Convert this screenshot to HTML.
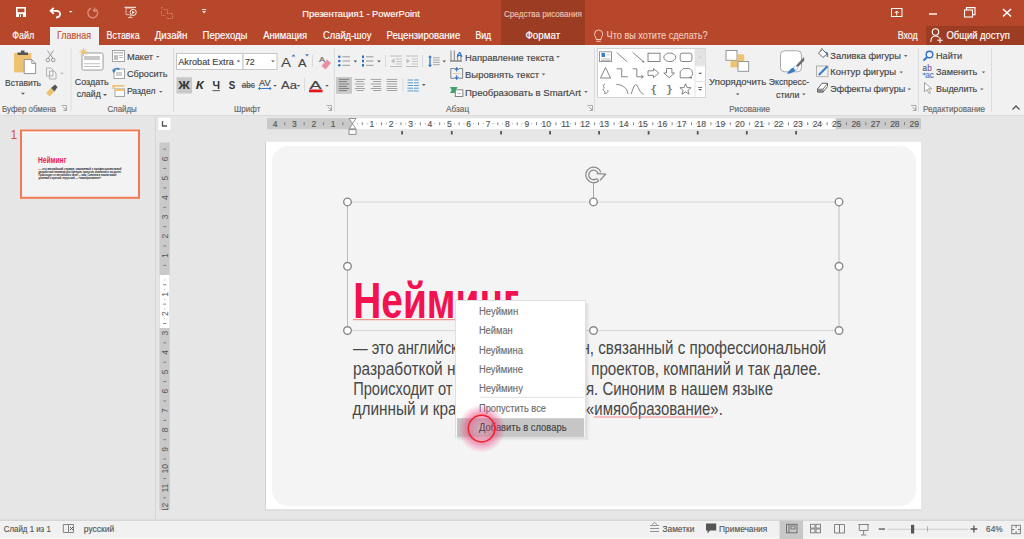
<!DOCTYPE html>
<html><head><meta charset="utf-8">
<style>
*{margin:0;padding:0}
html,body{width:1024px;height:539px;overflow:hidden;background:#E6E6E6}
svg{position:absolute;left:0;top:0;font-family:"Liberation Sans",sans-serif}
</style></head><body>
<svg width="1024" height="539" viewBox="0 0 1024 539">
<rect x="0" y="0" width="1024" height="45" fill="#B7472A" />
<rect x="501" y="0" width="84" height="45" fill="#9C3C23" />
<rect x="926" y="26" width="98" height="19" fill="#9C3C23" />
<rect x="50" y="27" width="49" height="18" fill="#F1F1F1" />
<rect x="0" y="45" width="1024" height="70" fill="#F1F1F1" />
<rect x="0" y="115" width="1024" height="1" fill="#DADADA" />
<rect x="0" y="116" width="1024" height="404" fill="#E6E6E6" />
<rect x="155" y="116" width="1" height="404" fill="#D6D6D6" />
<rect x="0" y="519.5" width="1024" height="1.5" fill="#D6D6D6" />
<rect x="0" y="521" width="1024" height="18" fill="#F1F1F1" />
<rect x="0" y="537" width="1024" height="2" fill="#F6F6F6" />
<rect x="16" y="7" width="10" height="10" fill="#FFFFFF" />
<rect x="17.6" y="8.6" width="6.8" height="3.6" fill="#B7472A" />
<rect x="19" y="14.2" width="4" height="2.8" fill="#B7472A" />
<rect x="20" y="15" width="1" height="2" fill="#FFFFFF" />
<path d="M51 10.8 H56.8 A3.3 3.3 0 0 1 56.8 17.4 H56" fill="none" stroke="#fff" stroke-width="1.8"/>
<path d="M53.8 7.8 L50.6 10.8 L53.8 13.8" fill="none" stroke="#fff" stroke-width="1.8"/>
<path d="M68.9 10.9h3.6l-1.8 1.8z" fill="#FFFFFF"/>
<path d="M96 9.2 A4.9 4.9 0 1 1 91 8.3" fill="none" stroke="#D98C74" stroke-width="1.5"/>
<path d="M94.6 7.5 V11.5 M92.8 9.8 L94.6 11.6 L96.4 9.8" fill="none" stroke="#D98C74" stroke-width="1.3"/>
<path d="M124.5 7.3 H136" stroke="#fff" stroke-width="1"/>
<path d="M133 8 H126 V14.6 H129.5" fill="none" stroke="#F3D0C4" stroke-width="0.8"/>
<circle cx="133.2" cy="12.4" r="3.1" fill="none" stroke="#fff" stroke-width="0.9"/>
<path d="M132.2 10.8 L134.8 12.4 L132.2 14z" fill="#fff"/>
<path d="M130.3 15 V17.3 M128 17.6 H132.5" stroke="#F3D0C4" stroke-width="0.9"/>
<path d="M162 7 v2 M161 8 h2 M163.5 9.5 h4 v4 M161.5 11 v4.5 h4 M167 13.5 h5.5 v5 h-5.5 v-2" fill="none" stroke="#D98C74" stroke-width="0.9" stroke-dasharray="1.2 0.8"/>
<path d="M202 9.6 H206.2" stroke="#fff" stroke-width="0.9"/>
<path d="M202.1 11.3h4l-2 2z" fill="#FFFFFF"/>
<rect x="891.5" y="8.5" width="10.5" height="8" fill="none" stroke="#fff" stroke-width="1"/>
<path d="M896.7 15.5 V11 M894.7 13 L896.7 11 L898.7 13" fill="none" stroke="#fff" stroke-width="1"/>
<rect x="929" y="13.3" width="8" height="1.4" fill="#FFFFFF" />
<rect x="964.5" y="10" width="8" height="7" fill="none" stroke="#fff" stroke-width="1.1"/>
<path d="M966.5 10 V7.6 H975 V14.6 H972.5" fill="none" stroke="#fff" stroke-width="1.1"/>
<path d="M1003 9 L1011 16.5 M1011 9 L1003 16.5" stroke="#fff" stroke-width="1.6"/>
<text x="302.3" y="16.6" font-size="9.3" fill="#FFFFFF" stroke="#FFFFFF" stroke-width="0.15" textLength="117.5" lengthAdjust="spacingAndGlyphs" >Презентация1 - PowerPoint</text>
<text x="504" y="16.6" font-size="9" fill="#EBC2B4" stroke="#EBC2B4" stroke-width="0.15" textLength="78" lengthAdjust="spacingAndGlyphs" >Средства рисования</text>
<text x="12.2" y="39.1" font-size="10" fill="#FFFFFF" stroke="#FFFFFF" stroke-width="0.15" textLength="22.1" lengthAdjust="spacingAndGlyphs" >Файл</text>
<text x="57" y="39.1" font-size="10" fill="#C5502E" stroke="#C5502E" stroke-width="0.15" textLength="34" lengthAdjust="spacingAndGlyphs" >Главная</text>
<text x="106.6" y="39.1" font-size="10" fill="#FFFFFF" stroke="#FFFFFF" stroke-width="0.15" textLength="33" lengthAdjust="spacingAndGlyphs" >Вставка</text>
<text x="154.8" y="39.1" font-size="10" fill="#FFFFFF" stroke="#FFFFFF" stroke-width="0.15" textLength="32.5" lengthAdjust="spacingAndGlyphs" >Дизайн</text>
<text x="202.5" y="39.1" font-size="10" fill="#FFFFFF" stroke="#FFFFFF" stroke-width="0.15" textLength="45" lengthAdjust="spacingAndGlyphs" >Переходы</text>
<text x="263.2" y="39.1" font-size="10" fill="#FFFFFF" stroke="#FFFFFF" stroke-width="0.15" textLength="44" lengthAdjust="spacingAndGlyphs" >Анимация</text>
<text x="323.1" y="39.1" font-size="10" fill="#FFFFFF" stroke="#FFFFFF" stroke-width="0.15" textLength="48.2" lengthAdjust="spacingAndGlyphs" >Слайд-шоу</text>
<text x="386.5" y="39.1" font-size="10" fill="#FFFFFF" stroke="#FFFFFF" stroke-width="0.15" textLength="73.7" lengthAdjust="spacingAndGlyphs" >Рецензирование</text>
<text x="475.4" y="39.1" font-size="10" fill="#FFFFFF" stroke="#FFFFFF" stroke-width="0.15" textLength="15.7" lengthAdjust="spacingAndGlyphs" >Вид</text>
<text x="525.4" y="39.1" font-size="10" fill="#FFFFFF" stroke="#FFFFFF" stroke-width="0.15" textLength="34.8" lengthAdjust="spacingAndGlyphs" >Формат</text>
<path d="M596.2 39.5 C596.2 37 594.6 36.6 594.6 34 A4 4 0 0 1 602.6 34 C602.6 36.6 601 37 601 39.5 Z M596.4 41.3 H600.8" fill="none" stroke="#F2C9BB" stroke-width="1"/>
<text x="606.6" y="39.1" font-size="10" fill="#F2C9BB" stroke="#F2C9BB" stroke-width="0.15" textLength="101" lengthAdjust="spacingAndGlyphs" >Что вы хотите сделать?</text>
<text x="897.7" y="39.1" font-size="10" fill="#FFFFFF" stroke="#FFFFFF" stroke-width="0.15" textLength="20" lengthAdjust="spacingAndGlyphs" >Вход</text>
<circle cx="935.5" cy="32" r="3.2" fill="none" stroke="#fff" stroke-width="1.1"/>
<path d="M930.8 42 C930.8 37.8 933 36 935.5 36 C937 36 938 36.5 938.8 37.3" fill="none" stroke="#fff" stroke-width="1.1"/>
<path d="M940 37.5 V43 M937.3 40.3 H942.7" stroke="#fff" stroke-width="1.1"/>
<text x="946.5" y="39.1" font-size="10" fill="#FFFFFF" stroke="#FFFFFF" stroke-width="0.15" textLength="63.3" lengthAdjust="spacingAndGlyphs" >Общий доступ</text>
<text x="2" y="111.7" font-size="8.3" fill="#666666" stroke="#666666" stroke-width="0.15" textLength="54" lengthAdjust="spacingAndGlyphs" >Буфер обмена</text>
<text x="107.4" y="111.7" font-size="8.3" fill="#666666" stroke="#666666" stroke-width="0.15" textLength="29.4" lengthAdjust="spacingAndGlyphs" >Слайды</text>
<text x="234" y="111.7" font-size="8.3" fill="#666666" stroke="#666666" stroke-width="0.15" textLength="26.3" lengthAdjust="spacingAndGlyphs" >Шрифт</text>
<text x="446.1" y="111.7" font-size="8.3" fill="#666666" stroke="#666666" stroke-width="0.15" textLength="23" lengthAdjust="spacingAndGlyphs" >Абзац</text>
<text x="729.2" y="111.7" font-size="8.3" fill="#666666" stroke="#666666" stroke-width="0.15" textLength="40.9" lengthAdjust="spacingAndGlyphs" >Рисование</text>
<text x="922.9" y="111.7" font-size="8.3" fill="#666666" stroke="#666666" stroke-width="0.15" textLength="62.2" lengthAdjust="spacingAndGlyphs" >Редактирование</text>
<path d="M61.5 105.5 h5 v5 M63.0 107 l3.5 3.5 M63.5 110.5 h2.5 v-2.5" fill="none" stroke="#9A9A9A" stroke-width="0.8"/>
<path d="M326.5 105.5 h5 v5 M328.0 107 l3.5 3.5 M328.5 110.5 h2.5 v-2.5" fill="none" stroke="#9A9A9A" stroke-width="0.8"/>
<path d="M587.5 105.5 h5 v5 M589.0 107 l3.5 3.5 M589.5 110.5 h2.5 v-2.5" fill="none" stroke="#9A9A9A" stroke-width="0.8"/>
<path d="M911 105.5 h5 v5 M912.5 107 l3.5 3.5 M913 110.5 h2.5 v-2.5" fill="none" stroke="#9A9A9A" stroke-width="0.8"/>
<path d="M1012.5 109.5 L1016 106 L1019.5 109.5" fill="none" stroke="#555" stroke-width="1.3"/>
<rect x="70.5" y="48" width="1" height="64" fill="#DDDDDD" />
<rect x="173" y="48" width="1" height="64" fill="#DDDDDD" />
<rect x="334" y="48" width="1" height="64" fill="#DDDDDD" />
<rect x="594" y="48" width="1" height="64" fill="#DDDDDD" />
<rect x="918" y="48" width="1" height="64" fill="#DDDDDD" />
<rect x="991" y="48" width="1" height="64" fill="#DDDDDD" />
<rect x="14" y="53" width="17.4" height="19.4" fill="#EFC271" />
<path d="M17.5 55 V52.5 H21 V50.5 H24.5 V52.5 H28 V55z" fill="#555"/>
<path d="M24.2 59.6 H31.8 L35.6 63.4 V73.6 H24.2Z" fill="#fff" stroke="#888" stroke-width="0.9"/>
<path d="M31.8 59.6 V63.4 H35.6" fill="none" stroke="#888" stroke-width="0.9"/>
<text x="5" y="85.8" font-size="9.4" fill="#444444" stroke="#444444" stroke-width="0.15" textLength="36" lengthAdjust="spacingAndGlyphs" >Вставить</text>
<path d="M21 92.8h4l-2 2z" fill="#555"/>
<path d="M47.5 50.5 L53 58.5 M53.5 50.5 L48 58.5" stroke="#9A9A9A" stroke-width="1"/>
<circle cx="47.8" cy="60" r="1.8" fill="none" stroke="#9A9A9A" stroke-width="1"/><circle cx="53.2" cy="60" r="1.8" fill="none" stroke="#9A9A9A" stroke-width="1"/>
<path d="M46.5 68 h4.5 l2 2 v6 h-6.5z M49.5 71 h4.5 l2 2 v6 h-6.5z" fill="#F4F4F4" stroke="#A8A8A8" stroke-width="0.9"/>
<path d="M60.4 72.7h3.2l-1.6 1.6z" fill="#A0A0A0"/>
<path d="M46 93 L51 88 L54.5 91.5 L49.5 96.5z" fill="#EFC271"/>
<path d="M51 88 L55 84.5 L57.5 87 L54.5 91.5z" fill="#555"/>
<rect x="82" y="53" width="21" height="17" rx="1.5" fill="#fff" stroke="#9A9A9A" stroke-width="1"/>
<rect x="84" y="56" width="16" height="4" fill="#C8C8C8" />
<rect x="84" y="63.3" width="16" height="0.9" fill="#B8B8B8" />
<rect x="84" y="66" width="16" height="0.9" fill="#B8B8B8" />
<g stroke="#EFC271" stroke-width="1"><path d="M83.5 48 v8 M79.5 52 h8 M80.7 49.2 l5.6 5.6 M86.3 49.2 l-5.6 5.6"/></g><circle cx="83.5" cy="52" r="2" fill="#EFC271"/>
<text x="74.7" y="85.4" font-size="9.4" fill="#444444" stroke="#444444" stroke-width="0.15" textLength="34" lengthAdjust="spacingAndGlyphs" >Создать</text>
<text x="76.7" y="97.2" font-size="9.4" fill="#444444" stroke="#444444" stroke-width="0.15" textLength="24" lengthAdjust="spacingAndGlyphs" >слайд</text>
<path d="M103 94.0h4l-2 2z" fill="#555"/>
<rect x="112.5" y="50.5" width="12" height="11" fill="#fff" stroke="#9A9A9A" stroke-width="0.9"/>
<rect x="114" y="52" width="9" height="1.5" fill="#BFBFBF" />
<rect x="114" y="55" width="4" height="5" fill="#BFBFBF" />
<rect x="119" y="55" width="4" height="1" fill="#BFBFBF" />
<rect x="119" y="57" width="4" height="1" fill="#BFBFBF" />
<text x="126.9" y="59.9" font-size="9.4" fill="#444444" stroke="#444444" stroke-width="0.15" textLength="26.2" lengthAdjust="spacingAndGlyphs" >Макет</text>
<path d="M156.0 55.9h3.6l-1.8 1.8z" fill="#666"/>
<rect x="114" y="69" width="10.5" height="9.5" fill="#fff" stroke="#9A9A9A" stroke-width="0.9"/>
<rect x="116" y="72" width="6" height="4" fill="#CFCFCF" />
<path d="M113.5 71.5 A3.5 3.5 0 0 1 119.5 69.5" fill="none" stroke="#3C7CC4" stroke-width="1.5"/><path d="M112 69.5 L113.5 73 L116 70.5z" fill="#3C7CC4"/>
<text x="126.9" y="76.8" font-size="9.4" fill="#444444" stroke="#444444" stroke-width="0.15" textLength="40.6" lengthAdjust="spacingAndGlyphs" >Сбросить</text>
<rect x="112.5" y="85" width="12" height="1.6" fill="#EFC271" />
<rect x="112.5" y="85" width="2" height="4" fill="#EFC271" />
<rect x="115" y="89" width="9.5" height="7.5" fill="#fff" stroke="#9A9A9A" stroke-width="0.9"/>
<rect x="115" y="89" width="9.5" height="2" fill="#EFC271" />
<text x="126.9" y="94.4" font-size="9.4" fill="#444444" stroke="#444444" stroke-width="0.15" textLength="28.6" lengthAdjust="spacingAndGlyphs" >Раздел</text>
<path d="M159.0 90.89999999999999h3.6l-1.8 1.8z" fill="#666"/>
<rect x="176.5" y="53.5" width="66.5" height="16" fill="#fff" stroke="#C6C6C6" stroke-width="1"/>
<rect x="243" y="53.5" width="34" height="16" fill="#fff" stroke="#C6C6C6" stroke-width="1"/>
<text x="178.2" y="65.4" font-size="9.4" fill="#444444" stroke="#444444" stroke-width="0.15" textLength="55.6" lengthAdjust="spacingAndGlyphs" >Akrobat Extra</text>
<path d="M236.7 60.4h3.6l-1.8 1.8z" fill="#555"/>
<text x="245" y="65.4" font-size="9.4" fill="#444444" stroke="#444444" stroke-width="0.15" textLength="9.7" lengthAdjust="spacingAndGlyphs" >72</text>
<path d="M271.2 60.4h3.6l-1.8 1.8z" fill="#555"/>
<text x="281" y="67" font-size="13" fill="#444444" textLength="10" lengthAdjust="spacingAndGlyphs" >A</text>
<path d="M291.5 56.5 L293.5 54.2 L295.5 56.5z" fill="#3C7CC4"/>
<text x="298" y="67" font-size="10.5" fill="#444444" stroke="#444444" stroke-width="0.15" textLength="8.5" lengthAdjust="spacingAndGlyphs" >A</text>
<path d="M305 54.3 L307 56.6 L309 54.3z" fill="#3C7CC4"/>
<rect x="312" y="55" width="1" height="12" fill="#DADADA" />
<text x="319" y="62" font-size="8" fill="#666" stroke="#666" stroke-width="0.15" textLength="6" lengthAdjust="spacingAndGlyphs" >A</text>
<path d="M321.5 66 L327 59.5 L331 63 L325.5 69.5z" fill="#E88FA0"/>
<rect x="176.5" y="77.2" width="15.6" height="16.3" fill="#C8C8C8" />
<text x="178.2" y="89.3" font-size="11" fill="#333" font-weight="bold" textLength="11.6" lengthAdjust="spacingAndGlyphs" >Ж</text>
<text x="195.8" y="89.3" font-size="11" fill="#333" font-weight="bold" textLength="8" lengthAdjust="spacingAndGlyphs" font-style="italic">К</text>
<text x="212.5" y="89.3" font-size="11" fill="#333" font-weight="bold" textLength="7.5" lengthAdjust="spacingAndGlyphs" >Ч</text>
<rect x="212.5" y="90.3" width="7.5" height="0.8" fill="#333" />
<text x="228.7" y="89.3" font-size="11.5" fill="#333" font-weight="bold" textLength="6.5" lengthAdjust="spacingAndGlyphs" >S</text>
<text x="241.7" y="88.3" font-size="9" fill="#555" stroke="#555" stroke-width="0.15" textLength="13" lengthAdjust="spacingAndGlyphs" >abc</text>
<rect x="241.5" y="85.3" width="13.5" height="0.9" fill="#555" />
<text x="259" y="85.5" font-size="9" fill="#444444" stroke="#444444" stroke-width="0.15" textLength="11.5" lengthAdjust="spacingAndGlyphs" >AV</text>
<path d="M258.5 88.5 H271 M260 87 L258.5 88.5 L260 90 M269.5 87 L271 88.5 L269.5 90" fill="none" stroke="#3C7CC4" stroke-width="1"/>
<path d="M273.2 84.89999999999999h3.6l-1.8 1.8z" fill="#555"/>
<text x="281" y="89.3" font-size="11" fill="#444444" stroke="#444444" stroke-width="0.15" textLength="16" lengthAdjust="spacingAndGlyphs" >Aa</text>
<path d="M296.7 84.89999999999999h3.6l-1.8 1.8z" fill="#555"/>
<rect x="304" y="78" width="1" height="13" fill="#DADADA" />
<text x="309.5" y="88.5" font-size="11.5" fill="#444444" stroke="#444444" stroke-width="0.15" textLength="12" lengthAdjust="spacingAndGlyphs" >A</text>
<rect x="309" y="89.5" width="13.5" height="2.8" fill="#E5141B" />
<path d="M325.2 84.89999999999999h3.6l-1.8 1.8z" fill="#555"/>
<circle cx="339.3" cy="56.8" r="1.3" fill="#2E72C6"/>
<circle cx="339.3" cy="61" r="1.3" fill="#2E72C6"/>
<circle cx="339.3" cy="65.3" r="1.3" fill="#2E72C6"/>
<rect x="342.5" y="56.3" width="7.5" height="1" fill="#9A9A9A" />
<rect x="342.5" y="60.5" width="7.5" height="1" fill="#9A9A9A" />
<rect x="342.5" y="64.8" width="7.5" height="1" fill="#9A9A9A" />
<path d="M353.59999999999997 60.6h3.6l-1.8 1.8z" fill="#555"/>
<rect x="362" y="55.5" width="2" height="2.6" fill="#2E72C6" />
<rect x="362" y="59.7" width="2" height="2.6" fill="#2E72C6" />
<rect x="362" y="64.0" width="2" height="2.6" fill="#2E72C6" />
<rect x="366" y="56.3" width="7.5" height="1" fill="#9A9A9A" />
<rect x="366" y="60.5" width="7.5" height="1" fill="#9A9A9A" />
<rect x="366" y="64.8" width="7.5" height="1" fill="#9A9A9A" />
<path d="M377.2 60.6h3.6l-1.8 1.8z" fill="#555"/>
<rect x="385" y="55" width="1" height="12" fill="#DADADA" />
<rect x="390" y="55.5" width="12" height="1" fill="#BDBDBD" />
<rect x="390" y="66" width="12" height="1" fill="#BDBDBD" />
<rect x="396" y="58.5" width="6" height="1" fill="#C4C4C4" />
<rect x="396" y="61" width="6" height="1" fill="#C4C4C4" />
<rect x="396" y="63.5" width="6" height="1" fill="#C4C4C4" />
<path d="M394.5 58.5 L391 61 L394.5 63.5z" fill="#BDBDBD"/>
<rect x="406" y="55.5" width="12" height="1" fill="#BDBDBD" />
<rect x="406" y="66" width="12" height="1" fill="#BDBDBD" />
<rect x="412" y="58.5" width="6" height="1" fill="#C4C4C4" />
<rect x="412" y="61" width="6" height="1" fill="#C4C4C4" />
<rect x="412" y="63.5" width="6" height="1" fill="#C4C4C4" />
<path d="M406.5 58.5 L410 61 L406.5 63.5z" fill="#BDBDBD"/>
<rect x="422" y="55" width="1" height="12" fill="#DADADA" />
<path d="M428 57.5 L430 55.2 L432 57.5z M428 64.8 L430 67.2 L432 64.8z" fill="#2E72C6"/><path d="M430 57 V65" stroke="#2E72C6" stroke-width="1.3"/>
<rect x="433" y="57.3" width="6.8" height="1" fill="#A8A8A8" />
<rect x="433" y="59.6" width="6.8" height="1" fill="#A8A8A8" />
<rect x="433" y="61.9" width="6.8" height="1" fill="#A8A8A8" />
<rect x="433" y="64.2" width="6.8" height="1" fill="#A8A8A8" />
<path d="M442.4 60.6h3.6l-1.8 1.8z" fill="#555"/>
<rect x="336" y="77" width="16" height="16.8" fill="#C8C8C8" />
<rect x="338.8" y="78.89999999999999" width="10.4" height="0.9" fill="#7A7A7A" />
<rect x="354.8" y="78.89999999999999" width="10.3" height="0.9" fill="#999999" />
<rect x="370.6" y="78.89999999999999" width="10.6" height="0.9" fill="#999999" />
<rect x="386.6" y="78.89999999999999" width="10.6" height="0.9" fill="#999999" />
<rect x="338.8" y="81.1" width="8.2" height="0.9" fill="#7A7A7A" />
<rect x="356.2" y="81.1" width="7.5" height="0.9" fill="#999999" />
<rect x="373" y="81.1" width="8.2" height="0.9" fill="#999999" />
<rect x="386.6" y="81.1" width="10.6" height="0.9" fill="#999999" />
<rect x="338.8" y="83.5" width="10.4" height="0.9" fill="#7A7A7A" />
<rect x="354.8" y="83.5" width="10.3" height="0.9" fill="#999999" />
<rect x="370.6" y="83.5" width="10.6" height="0.9" fill="#999999" />
<rect x="386.6" y="83.5" width="10.6" height="0.9" fill="#999999" />
<rect x="338.8" y="85.89999999999999" width="8.2" height="0.9" fill="#7A7A7A" />
<rect x="356.2" y="85.89999999999999" width="7.5" height="0.9" fill="#999999" />
<rect x="373" y="85.89999999999999" width="8.2" height="0.9" fill="#999999" />
<rect x="386.6" y="85.89999999999999" width="10.6" height="0.9" fill="#999999" />
<rect x="338.8" y="88.0" width="10.4" height="0.9" fill="#7A7A7A" />
<rect x="354.8" y="88.0" width="10.3" height="0.9" fill="#999999" />
<rect x="370.6" y="88.0" width="10.6" height="0.9" fill="#999999" />
<rect x="386.6" y="88.0" width="10.6" height="0.9" fill="#999999" />
<rect x="338.8" y="90.0" width="8.2" height="0.9" fill="#7A7A7A" />
<rect x="356.2" y="90.0" width="7.5" height="0.9" fill="#999999" />
<rect x="373" y="90.0" width="8.2" height="0.9" fill="#999999" />
<rect x="386.6" y="90.0" width="10.6" height="0.9" fill="#999999" />
<rect x="402.4" y="78" width="1" height="13" fill="#DADADA" />
<rect x="407.5" y="79.5" width="11.3" height="1" fill="#5B9BD5" />
<rect x="407.5" y="82.3" width="11.3" height="1" fill="#5B9BD5" />
<rect x="407.5" y="85" width="11.3" height="1" fill="#5B9BD5" />
<rect x="407.5" y="87.7" width="11.3" height="1" fill="#5B9BD5" />
<rect x="407.5" y="90.4" width="11.3" height="1" fill="#5B9BD5" />
<rect x="413" y="79" width="0.8" height="12" fill="#fff" />
<path d="M422.0 84.1h3.6l-1.8 1.8z" fill="#555"/>
<path d="M451 50.5 V60.5 M454.3 50.5 V60.5 M457.6 54 V60.5 M460.9 54 V60.5" stroke="#777" stroke-width="0.9"/>
<path d="M450 61 H462" stroke="#555" stroke-width="1"/>
<text x="456.6" y="56.6" font-size="8" fill="#2E72C6" font-weight="bold" textLength="6" lengthAdjust="spacingAndGlyphs" >A</text>
<path d="M450.8 68.5 H454.5 M459 68.5 H462.6 V78.3 H459 M454.5 78.3 H450.8 V68.5" fill="none" stroke="#777" stroke-width="0.9"/>
<rect x="453" y="73" width="7.5" height="0.8" fill="#E8C49A" />
<path d="M456.7 68 V71.5 M456.7 75.3 V79 M454.8 69.8 L456.7 67.8 L458.6 69.8 M454.8 77.2 L456.7 79.2 L458.6 77.2" fill="none" stroke="#2E72C6" stroke-width="1.1"/>
<path d="M450 87 H457.6 L456 90 L457.6 93 H450 L451.6 90z" fill="#3FA66B"/>
<rect x="455.3" y="89.8" width="7.6" height="6.7" fill="#fff" stroke="#777" stroke-width="0.9"/>
<rect x="457.3" y="93" width="3.5" height="0.7" fill="#999" />
<text x="465" y="60.5" font-size="9.4" fill="#444444" stroke="#444444" stroke-width="0.15" textLength="89" lengthAdjust="spacingAndGlyphs" >Направление текста</text>
<path d="M556.2 56.1h3.6l-1.8 1.8z" fill="#666"/>
<text x="465" y="78" font-size="9.4" fill="#444444" stroke="#444444" stroke-width="0.15" textLength="74" lengthAdjust="spacingAndGlyphs" >Выровнять текст</text>
<path d="M541.7 73.6h3.6l-1.8 1.8z" fill="#666"/>
<text x="465" y="95.5" font-size="9.4" fill="#444444" stroke="#444444" stroke-width="0.15" textLength="116" lengthAdjust="spacingAndGlyphs" >Преобразовать в SmartArt</text>
<path d="M584.2 91.1h3.6l-1.8 1.8z" fill="#666"/>
<rect x="597.5" y="48.5" width="108" height="49" fill="#fff" stroke="#D4D4D4" stroke-width="1"/>
<rect x="695" y="49" width="10.5" height="16.5" fill="#E3E3E3" />
<rect x="694.5" y="49" width="1" height="48.5" fill="#E3E3E3" />
<rect x="695" y="65.5" width="10.5" height="1" fill="#E3E3E3" />
<rect x="695" y="81" width="10.5" height="1" fill="#E3E3E3" />
<path d="M698.5 58.5 L700.2 56.5 L702 58.5" fill="none" stroke="#C0C0C0" stroke-width="0.8"/>
<path d="M698.4000000000001 72.69999999999999h3.6l-1.8 1.8z" fill="#555"/>
<rect x="698.2" y="87.2" width="4" height="0.8" fill="#555" />
<path d="M698.4000000000001 88.89999999999999h3.6l-1.8 1.8z" fill="#555"/>
<rect x="599.5" y="51.8" width="12" height="9.8" fill="#fff" stroke="#8A8A8A" stroke-width="0.9"/>
<rect x="601.5" y="53" width="3.5" height="4" fill="#3C7CC4" />
<rect x="606" y="54.5" width="4.5" height="0.8" fill="#C8C8C8" />
<rect x="601" y="58.6" width="9.5" height="0.8" fill="#B0B0B0" />
<rect x="601" y="60.1" width="9.5" height="0.8" fill="#B0B0B0" />
<g fill="none" stroke="#707070" stroke-width="0.85"><path d="M616.7 52.5 L627.2 61.8"/><path d="M632.7 52.5 L643.3 61.5"/><rect x="648" y="53.2" width="12" height="8.3"/><ellipse cx="669.8" cy="57.3" rx="6" ry="4.3"/><rect x="680.2" y="53.2" width="11.7" height="8.3" rx="2"/><path d="M605.5 67.5 L600.5 78 H610.5z"/><path d="M616.7 68.8 H621.7 V76.8 H627.9"/><path d="M632.7 68.8 H636.8 V76.8 H643"/><path d="M648 70.8 H653.5 V68.5 L658.8 73.1 L653.5 77.7 V75.4 H648z"/><path d="M666.5 68.5 H671.9 V73 H674.6 L669.2 77.8 L663.8 73 H666.5z"/><path d="M680.2 77.8 V71.5 L683.4 68.5 H687 A4.9 4.7 0 0 1 689.5 77.5 L691.9 77.8z"/><path d="M605 84 C601 86 606 87.5 603.5 89 C601.5 90.5 606.5 91 604.5 93.5 C607 93.5 609 91.5 607.5 90"/><path d="M616.3 84.4 C622 84.4 627.5 88 627.9 94"/><path d="M631.3 94 C633 88 634.5 84.5 635.8 84.5 C638 84.5 639.5 94 643.6 94"/><path d="M685.5 83.7 L687 87.6 L691.1 87.7 L687.9 90.3 L689.1 94.2 L685.5 91.9 L681.9 94.2 L683.1 90.3 L679.9 87.7 L684 87.6z"/></g>
<text x="651.3" y="93" font-size="11.5" fill="#707070" stroke="#707070" stroke-width="0.15" textLength="5" lengthAdjust="spacingAndGlyphs" >{</text>
<text x="667" y="93" font-size="11.5" fill="#707070" stroke="#707070" stroke-width="0.15" textLength="5" lengthAdjust="spacingAndGlyphs" >}</text>
<circle cx="643.4" cy="61.6" r="0.9" fill="#707070"/>
<path d="M641.3 75.3 L643.4 76.8 L641.3 78.3" fill="none" stroke="#707070" stroke-width="0.85"/>
<rect x="726" y="50.5" width="11" height="9.8" fill="#fff" stroke="#8A8A8A" stroke-width="0.9"/>
<rect x="730.5" y="60.8" width="8" height="6.6" fill="#EFC271" />
<rect x="737.5" y="54.4" width="6.7" height="7" fill="#EFC271" />
<rect x="738" y="61.6" width="10.7" height="9.7" fill="#fff" stroke="#8A8A8A" stroke-width="0.9"/>
<text x="709.1" y="85" font-size="9.4" fill="#444444" stroke="#444444" stroke-width="0.15" textLength="57.1" lengthAdjust="spacingAndGlyphs" >Упорядочить</text>
<path d="M735.9000000000001 93.39999999999999h3.6l-1.8 1.8z" fill="#555"/>
<rect x="780.5" y="50.8" width="21" height="21" rx="4" fill="#fff" stroke="#A8A8A8" stroke-width="1"/>
<path d="M804 57 L804.3 60.5 L797.8 67.2 L796 65.6z" fill="#6E6E6E"/>
<path d="M794.5 67.5 C791.5 67.5 789 70.5 787 73.8 C791 73.8 794.5 72 796.5 69.5z" fill="#3C7CC4"/>
<circle cx="795.8" cy="68" r="1.9" fill="#fff" stroke="#9AB8DC" stroke-width="0.7"/>
<text x="768.8" y="85" font-size="9.4" fill="#444444" stroke="#444444" stroke-width="0.15" textLength="40.3" lengthAdjust="spacingAndGlyphs" >Экспресс-</text>
<text x="776" y="98" font-size="9.4" fill="#444444" stroke="#444444" stroke-width="0.15" textLength="23.4" lengthAdjust="spacingAndGlyphs" >стили</text>
<path d="M802.1 93.39999999999999h3.6l-1.8 1.8z" fill="#555"/>
<path d="M818.5 53 L822.5 49.5 L827 54 L823 57.5z" fill="#fff" stroke="#555" stroke-width="0.9" stroke-linejoin="round"/>
<path d="M820.5 51.5 L821.5 48.3 L823 49.5" fill="none" stroke="#777" stroke-width="0.8"/>
<path d="M826.3 52 C827.5 53.5 828 55.5 827 57" fill="none" stroke="#3C7CC4" stroke-width="1.3"/>
<rect x="816.5" y="66" width="11.5" height="10.5" fill="none" stroke="#A8A8A8" stroke-width="0.9"/>
<rect x="816.2" y="76" width="12.5" height="1.2" fill="#C0C0C0" />
<path d="M818.8 75 L827.5 66.3" stroke="#3C7CC4" stroke-width="2"/>
<path d="M817.5 89 L822 83.3 H827.5 L827.5 86.5 L823 92.2 H817.5z" fill="#fff" stroke="#555" stroke-width="0.9" stroke-linejoin="round"/>
<path d="M817.5 89.2 H823 L827.5 83.5 M823 89.2 V92.2" fill="none" stroke="#555" stroke-width="0.8"/>
<rect x="817.8" y="89.6" width="5" height="2.4" fill="#888" />
<text x="830.3" y="59" font-size="9.4" fill="#444444" stroke="#444444" stroke-width="0.15" textLength="70.6" lengthAdjust="spacingAndGlyphs" >Заливка фигуры</text>
<path d="M903.9000000000001 55.1h3.6l-1.8 1.8z" fill="#666"/>
<text x="830.3" y="75.3" font-size="9.4" fill="#444444" stroke="#444444" stroke-width="0.15" textLength="65.8" lengthAdjust="spacingAndGlyphs" >Контур фигуры</text>
<path d="M899.5 71.39999999999999h3.6l-1.8 1.8z" fill="#666"/>
<text x="830.3" y="92.4" font-size="9.4" fill="#444444" stroke="#444444" stroke-width="0.15" textLength="74.8" lengthAdjust="spacingAndGlyphs" >Эффекты фигуры</text>
<path d="M907.5 88.5h3.6l-1.8 1.8z" fill="#666"/>
<circle cx="929.5" cy="54.5" r="3.3" fill="none" stroke="#2E72C6" stroke-width="1.4"/><path d="M927.3 57 L923.5 60.5" stroke="#2E72C6" stroke-width="1.8"/>
<text x="936" y="59" font-size="9.4" fill="#444444" stroke="#444444" stroke-width="0.15" textLength="26.1" lengthAdjust="spacingAndGlyphs" >Найти</text>
<text x="922.6" y="71.3" font-size="8.5" fill="#555" stroke="#555" stroke-width="0.15" textLength="4.5" lengthAdjust="spacingAndGlyphs" >a</text>
<text x="927.2" y="71.3" font-size="8.5" fill="#7B52AB" stroke="#7B52AB" stroke-width="0.15" textLength="4.6" lengthAdjust="spacingAndGlyphs" >b</text>
<text x="925.3" y="77.8" font-size="8.5" fill="#3C7CC4" stroke="#3C7CC4" stroke-width="0.15" textLength="8.5" lengthAdjust="spacingAndGlyphs" >ac</text>
<path d="M922.5 74 H925 M924 72.8 L925.3 74 L924 75.2" fill="none" stroke="#2E72C6" stroke-width="0.9"/>
<text x="936" y="75.3" font-size="9.4" fill="#444444" stroke="#444444" stroke-width="0.15" textLength="41.2" lengthAdjust="spacingAndGlyphs" >Заменить</text>
<path d="M981.7 71.39999999999999h3.6l-1.8 1.8z" fill="#666"/>
<path d="M924.5 82.5 V92 L927 89.5 L929 93.5 L930.5 92.8 L928.5 88.8 H931.8z" fill="#fff" stroke="#999" stroke-width="0.9"/>
<text x="936" y="92.4" font-size="9.4" fill="#444444" stroke="#444444" stroke-width="0.15" textLength="41.2" lengthAdjust="spacingAndGlyphs" >Выделить</text>
<path d="M980.0 88.5h3.6l-1.8 1.8z" fill="#666"/>
<rect x="267" y="118.25" width="654" height="11" fill="#C9C9C9" />
<rect x="353" y="118.25" width="482.6" height="11" fill="#FFFFFF" />
<text x="371.87" y="126.8" font-size="8.5" fill="#555555" stroke="#555555" stroke-width="0.15" text-anchor="middle" >1</text>
<text x="391.24" y="126.8" font-size="8.5" fill="#555555" stroke="#555555" stroke-width="0.15" text-anchor="middle" >2</text>
<text x="410.61" y="126.8" font-size="8.5" fill="#555555" stroke="#555555" stroke-width="0.15" text-anchor="middle" >3</text>
<text x="429.98" y="126.8" font-size="8.5" fill="#555555" stroke="#555555" stroke-width="0.15" text-anchor="middle" >4</text>
<text x="449.35" y="126.8" font-size="8.5" fill="#555555" stroke="#555555" stroke-width="0.15" text-anchor="middle" >5</text>
<text x="468.72" y="126.8" font-size="8.5" fill="#555555" stroke="#555555" stroke-width="0.15" text-anchor="middle" >6</text>
<text x="488.09000000000003" y="126.8" font-size="8.5" fill="#555555" stroke="#555555" stroke-width="0.15" text-anchor="middle" >7</text>
<text x="507.46000000000004" y="126.8" font-size="8.5" fill="#555555" stroke="#555555" stroke-width="0.15" text-anchor="middle" >8</text>
<text x="526.83" y="126.8" font-size="8.5" fill="#555555" stroke="#555555" stroke-width="0.15" text-anchor="middle" >9</text>
<text x="546.2" y="126.8" font-size="8.5" fill="#555555" stroke="#555555" stroke-width="0.15" text-anchor="middle" >10</text>
<text x="565.57" y="126.8" font-size="8.5" fill="#555555" stroke="#555555" stroke-width="0.15" text-anchor="middle" >11</text>
<text x="584.94" y="126.8" font-size="8.5" fill="#555555" stroke="#555555" stroke-width="0.15" text-anchor="middle" >12</text>
<text x="604.31" y="126.8" font-size="8.5" fill="#555555" stroke="#555555" stroke-width="0.15" text-anchor="middle" >13</text>
<text x="623.6800000000001" y="126.8" font-size="8.5" fill="#555555" stroke="#555555" stroke-width="0.15" text-anchor="middle" >14</text>
<text x="643.05" y="126.8" font-size="8.5" fill="#555555" stroke="#555555" stroke-width="0.15" text-anchor="middle" >15</text>
<text x="662.4200000000001" y="126.8" font-size="8.5" fill="#555555" stroke="#555555" stroke-width="0.15" text-anchor="middle" >16</text>
<text x="681.79" y="126.8" font-size="8.5" fill="#555555" stroke="#555555" stroke-width="0.15" text-anchor="middle" >17</text>
<text x="701.1600000000001" y="126.8" font-size="8.5" fill="#555555" stroke="#555555" stroke-width="0.15" text-anchor="middle" >18</text>
<text x="720.53" y="126.8" font-size="8.5" fill="#555555" stroke="#555555" stroke-width="0.15" text-anchor="middle" >19</text>
<text x="739.9000000000001" y="126.8" font-size="8.5" fill="#555555" stroke="#555555" stroke-width="0.15" text-anchor="middle" >20</text>
<text x="759.27" y="126.8" font-size="8.5" fill="#555555" stroke="#555555" stroke-width="0.15" text-anchor="middle" >21</text>
<text x="778.6400000000001" y="126.8" font-size="8.5" fill="#555555" stroke="#555555" stroke-width="0.15" text-anchor="middle" >22</text>
<text x="798.01" y="126.8" font-size="8.5" fill="#555555" stroke="#555555" stroke-width="0.15" text-anchor="middle" >23</text>
<text x="817.38" y="126.8" font-size="8.5" fill="#555555" stroke="#555555" stroke-width="0.15" text-anchor="middle" >24</text>
<text x="836.75" y="126.8" font-size="8.5" fill="#555555" stroke="#555555" stroke-width="0.15" text-anchor="middle" >25</text>
<text x="856.12" y="126.8" font-size="8.5" fill="#555555" stroke="#555555" stroke-width="0.15" text-anchor="middle" >26</text>
<text x="875.49" y="126.8" font-size="8.5" fill="#555555" stroke="#555555" stroke-width="0.15" text-anchor="middle" >27</text>
<text x="894.86" y="126.8" font-size="8.5" fill="#555555" stroke="#555555" stroke-width="0.15" text-anchor="middle" >28</text>
<text x="914.23" y="126.8" font-size="8.5" fill="#555555" stroke="#555555" stroke-width="0.15" text-anchor="middle" >29</text>
<text x="333.13" y="126.8" font-size="8.5" fill="#555555" stroke="#555555" stroke-width="0.15" text-anchor="middle" >1</text>
<text x="313.76" y="126.8" font-size="8.5" fill="#555555" stroke="#555555" stroke-width="0.15" text-anchor="middle" >2</text>
<text x="294.39" y="126.8" font-size="8.5" fill="#555555" stroke="#555555" stroke-width="0.15" text-anchor="middle" >3</text>
<text x="275.02" y="126.8" font-size="8.5" fill="#555555" stroke="#555555" stroke-width="0.15" text-anchor="middle" >4</text>
<rect x="284.305" y="122.2" width="0.9" height="3" fill="#777" />
<rect x="303.675" y="122.2" width="0.9" height="3" fill="#777" />
<rect x="323.045" y="122.2" width="0.9" height="3" fill="#777" />
<rect x="342.415" y="122.2" width="0.9" height="3" fill="#777" />
<rect x="361.785" y="122.2" width="0.9" height="3" fill="#777" />
<rect x="381.15500000000003" y="122.2" width="0.9" height="3" fill="#777" />
<rect x="400.52500000000003" y="122.2" width="0.9" height="3" fill="#777" />
<rect x="419.89500000000004" y="122.2" width="0.9" height="3" fill="#777" />
<rect x="439.26500000000004" y="122.2" width="0.9" height="3" fill="#777" />
<rect x="458.63500000000005" y="122.2" width="0.9" height="3" fill="#777" />
<rect x="478.005" y="122.2" width="0.9" height="3" fill="#777" />
<rect x="497.375" y="122.2" width="0.9" height="3" fill="#777" />
<rect x="516.745" y="122.2" width="0.9" height="3" fill="#777" />
<rect x="536.115" y="122.2" width="0.9" height="3" fill="#777" />
<rect x="555.485" y="122.2" width="0.9" height="3" fill="#777" />
<rect x="574.855" y="122.2" width="0.9" height="3" fill="#777" />
<rect x="594.225" y="122.2" width="0.9" height="3" fill="#777" />
<rect x="613.595" y="122.2" width="0.9" height="3" fill="#777" />
<rect x="632.965" y="122.2" width="0.9" height="3" fill="#777" />
<rect x="652.335" y="122.2" width="0.9" height="3" fill="#777" />
<rect x="671.705" y="122.2" width="0.9" height="3" fill="#777" />
<rect x="691.075" y="122.2" width="0.9" height="3" fill="#777" />
<rect x="710.445" y="122.2" width="0.9" height="3" fill="#777" />
<rect x="729.815" y="122.2" width="0.9" height="3" fill="#777" />
<rect x="749.1850000000001" y="122.2" width="0.9" height="3" fill="#777" />
<rect x="768.5550000000001" y="122.2" width="0.9" height="3" fill="#777" />
<rect x="787.9250000000001" y="122.2" width="0.9" height="3" fill="#777" />
<rect x="807.2950000000001" y="122.2" width="0.9" height="3" fill="#777" />
<rect x="826.6650000000001" y="122.2" width="0.9" height="3" fill="#777" />
<rect x="846.035" y="122.2" width="0.9" height="3" fill="#777" />
<rect x="865.4050000000001" y="122.2" width="0.9" height="3" fill="#777" />
<rect x="884.7750000000001" y="122.2" width="0.9" height="3" fill="#777" />
<rect x="904.1450000000001" y="122.2" width="0.9" height="3" fill="#777" />
<rect x="356.9425" y="123.2" width="0.9" height="1" fill="#999" />
<rect x="366.6275" y="123.2" width="0.9" height="1" fill="#999" />
<rect x="376.3125" y="123.2" width="0.9" height="1" fill="#999" />
<rect x="385.9975" y="123.2" width="0.9" height="1" fill="#999" />
<rect x="395.6825" y="123.2" width="0.9" height="1" fill="#999" />
<rect x="405.3675" y="123.2" width="0.9" height="1" fill="#999" />
<rect x="415.0525" y="123.2" width="0.9" height="1" fill="#999" />
<rect x="424.7375" y="123.2" width="0.9" height="1" fill="#999" />
<rect x="434.4225" y="123.2" width="0.9" height="1" fill="#999" />
<rect x="444.1075" y="123.2" width="0.9" height="1" fill="#999" />
<rect x="453.7925" y="123.2" width="0.9" height="1" fill="#999" />
<rect x="463.4775" y="123.2" width="0.9" height="1" fill="#999" />
<rect x="473.1625" y="123.2" width="0.9" height="1" fill="#999" />
<rect x="482.8475" y="123.2" width="0.9" height="1" fill="#999" />
<rect x="492.5325" y="123.2" width="0.9" height="1" fill="#999" />
<rect x="502.21750000000003" y="123.2" width="0.9" height="1" fill="#999" />
<rect x="511.90250000000003" y="123.2" width="0.9" height="1" fill="#999" />
<rect x="521.5875" y="123.2" width="0.9" height="1" fill="#999" />
<rect x="531.2725" y="123.2" width="0.9" height="1" fill="#999" />
<rect x="540.9575000000001" y="123.2" width="0.9" height="1" fill="#999" />
<rect x="550.6425" y="123.2" width="0.9" height="1" fill="#999" />
<rect x="560.3275" y="123.2" width="0.9" height="1" fill="#999" />
<rect x="570.0125" y="123.2" width="0.9" height="1" fill="#999" />
<rect x="579.6975000000001" y="123.2" width="0.9" height="1" fill="#999" />
<rect x="589.3825" y="123.2" width="0.9" height="1" fill="#999" />
<rect x="599.0675" y="123.2" width="0.9" height="1" fill="#999" />
<rect x="608.7525" y="123.2" width="0.9" height="1" fill="#999" />
<rect x="618.4375000000001" y="123.2" width="0.9" height="1" fill="#999" />
<rect x="628.1225000000001" y="123.2" width="0.9" height="1" fill="#999" />
<rect x="637.8075" y="123.2" width="0.9" height="1" fill="#999" />
<rect x="647.4925000000001" y="123.2" width="0.9" height="1" fill="#999" />
<rect x="657.1775000000001" y="123.2" width="0.9" height="1" fill="#999" />
<rect x="666.8625000000001" y="123.2" width="0.9" height="1" fill="#999" />
<rect x="676.5475" y="123.2" width="0.9" height="1" fill="#999" />
<rect x="686.2325" y="123.2" width="0.9" height="1" fill="#999" />
<rect x="695.9175" y="123.2" width="0.9" height="1" fill="#999" />
<rect x="705.6025000000001" y="123.2" width="0.9" height="1" fill="#999" />
<rect x="715.2875" y="123.2" width="0.9" height="1" fill="#999" />
<rect x="724.9725" y="123.2" width="0.9" height="1" fill="#999" />
<rect x="734.6575" y="123.2" width="0.9" height="1" fill="#999" />
<rect x="744.3425000000001" y="123.2" width="0.9" height="1" fill="#999" />
<rect x="754.0275" y="123.2" width="0.9" height="1" fill="#999" />
<rect x="763.7125" y="123.2" width="0.9" height="1" fill="#999" />
<rect x="773.3975" y="123.2" width="0.9" height="1" fill="#999" />
<rect x="783.0825000000001" y="123.2" width="0.9" height="1" fill="#999" />
<rect x="792.7675" y="123.2" width="0.9" height="1" fill="#999" />
<rect x="802.4525" y="123.2" width="0.9" height="1" fill="#999" />
<rect x="812.1375" y="123.2" width="0.9" height="1" fill="#999" />
<rect x="821.8225000000001" y="123.2" width="0.9" height="1" fill="#999" />
<rect x="831.5075" y="123.2" width="0.9" height="1" fill="#999" />
<path d="M349 118.5 H356 L352.5 123.5z M349 128.8 H356 L352.5 123.8z" fill="#fff" stroke="#7A7A7A" stroke-width="0.8"/>
<rect x="349" y="129.8" width="7" height="4.5" fill="#fff" stroke="#7A7A7A" stroke-width="0.8"/>
<rect x="401.2" y="131" width="1.8" height="3.5" fill="#555" />
<rect x="450.9" y="131" width="1.8" height="3.5" fill="#555" />
<rect x="500.2" y="131" width="1.8" height="3.5" fill="#555" />
<rect x="549.2" y="131" width="1.8" height="3.5" fill="#555" />
<rect x="598.2" y="131" width="1.8" height="3.5" fill="#555" />
<rect x="647.7" y="131" width="1.8" height="3.5" fill="#555" />
<rect x="696.8000000000001" y="131" width="1.8" height="3.5" fill="#555" />
<rect x="745.9000000000001" y="131" width="1.8" height="3.5" fill="#555" />
<rect x="795.2" y="131" width="1.8" height="3.5" fill="#555" />
<rect x="158.5" y="117.8" width="12" height="12.2" fill="#FFFFFF" />
<path d="M162.5 121 V126 H167" fill="none" stroke="#555" stroke-width="1.3"/>
<rect x="159.5" y="142.5" width="10.2" height="367.5" fill="#C9C9C9" />
<defs><clipPath id="vclip"><rect x="159.5" y="142.5" width="10.2" height="367.5"/></clipPath></defs><g clip-path="url(#vclip)">
<rect x="159.5" y="275" width="10.2" height="53" fill="#FFFFFF" />
<text x="0" y="0" font-size="8.5" fill="#555555" text-anchor="middle" transform="translate(167.6 255.63) rotate(-90)">1</text>
<text x="0" y="0" font-size="8.5" fill="#555555" text-anchor="middle" transform="translate(167.6 236.26) rotate(-90)">2</text>
<text x="0" y="0" font-size="8.5" fill="#555555" text-anchor="middle" transform="translate(167.6 216.89) rotate(-90)">3</text>
<text x="0" y="0" font-size="8.5" fill="#555555" text-anchor="middle" transform="translate(167.6 197.51999999999998) rotate(-90)">4</text>
<text x="0" y="0" font-size="8.5" fill="#555555" text-anchor="middle" transform="translate(167.6 178.14999999999998) rotate(-90)">5</text>
<text x="0" y="0" font-size="8.5" fill="#555555" text-anchor="middle" transform="translate(167.6 158.78) rotate(-90)">6</text>
<text x="0" y="0" font-size="8.5" fill="#555555" text-anchor="middle" transform="translate(167.6 294.37) rotate(-90)">1</text>
<text x="0" y="0" font-size="8.5" fill="#555555" text-anchor="middle" transform="translate(167.6 313.74) rotate(-90)">2</text>
<text x="0" y="0" font-size="8.5" fill="#555555" text-anchor="middle" transform="translate(167.6 333.11) rotate(-90)">3</text>
<text x="0" y="0" font-size="8.5" fill="#555555" text-anchor="middle" transform="translate(167.6 352.48) rotate(-90)">4</text>
<text x="0" y="0" font-size="8.5" fill="#555555" text-anchor="middle" transform="translate(167.6 371.85) rotate(-90)">5</text>
<text x="0" y="0" font-size="8.5" fill="#555555" text-anchor="middle" transform="translate(167.6 391.22) rotate(-90)">6</text>
<text x="0" y="0" font-size="8.5" fill="#555555" text-anchor="middle" transform="translate(167.6 410.59000000000003) rotate(-90)">7</text>
<text x="0" y="0" font-size="8.5" fill="#555555" text-anchor="middle" transform="translate(167.6 429.96000000000004) rotate(-90)">8</text>
<text x="0" y="0" font-size="8.5" fill="#555555" text-anchor="middle" transform="translate(167.6 449.33000000000004) rotate(-90)">9</text>
<text x="0" y="0" font-size="8.5" fill="#555555" text-anchor="middle" transform="translate(167.6 468.70000000000005) rotate(-90)">10</text>
<text x="0" y="0" font-size="8.5" fill="#555555" text-anchor="middle" transform="translate(167.6 488.07000000000005) rotate(-90)">11</text>
<text x="0" y="0" font-size="8.5" fill="#555555" text-anchor="middle" transform="translate(167.6 507.44) rotate(-90)">12</text>
</g>
<rect x="163.2" y="148.695" width="3" height="0.9" fill="#777" />
<rect x="163.2" y="168.06499999999997" width="3" height="0.9" fill="#777" />
<rect x="163.2" y="187.43499999999997" width="3" height="0.9" fill="#777" />
<rect x="163.2" y="206.80499999999998" width="3" height="0.9" fill="#777" />
<rect x="163.2" y="226.17499999999998" width="3" height="0.9" fill="#777" />
<rect x="163.2" y="245.545" width="3" height="0.9" fill="#777" />
<rect x="163.2" y="264.915" width="3" height="0.9" fill="#777" />
<rect x="163.2" y="284.285" width="3" height="0.9" fill="#777" />
<rect x="163.2" y="303.65500000000003" width="3" height="0.9" fill="#777" />
<rect x="163.2" y="323.02500000000003" width="3" height="0.9" fill="#777" />
<rect x="163.2" y="342.39500000000004" width="3" height="0.9" fill="#777" />
<rect x="163.2" y="361.76500000000004" width="3" height="0.9" fill="#777" />
<rect x="163.2" y="381.13500000000005" width="3" height="0.9" fill="#777" />
<rect x="163.2" y="400.505" width="3" height="0.9" fill="#777" />
<rect x="163.2" y="419.875" width="3" height="0.9" fill="#777" />
<rect x="163.2" y="439.245" width="3" height="0.9" fill="#777" />
<rect x="163.2" y="458.615" width="3" height="0.9" fill="#777" />
<rect x="163.2" y="477.985" width="3" height="0.9" fill="#777" />
<rect x="163.2" y="497.355" width="3" height="0.9" fill="#777" />
<rect x="164.2" y="279.4425" width="1" height="0.9" fill="#999" />
<rect x="164.2" y="289.1275" width="1" height="0.9" fill="#999" />
<rect x="164.2" y="298.8125" width="1" height="0.9" fill="#999" />
<rect x="164.2" y="308.4975" width="1" height="0.9" fill="#999" />
<rect x="164.2" y="318.1825" width="1" height="0.9" fill="#999" />
<text x="10.5" y="138.7" font-size="12" fill="#D9533A" >1</text>
<rect x="21" y="130.5" width="118" height="67.3" fill="#F3F3F3" stroke="#F07A52" stroke-width="2"/>
<rect x="22.2" y="131.7" width="115.6" height="1" fill="#FFFFFF" />
<text x="38" y="163.2" font-size="9.4" fill="#F01A55" font-weight="bold" textLength="28.4" lengthAdjust="spacingAndGlyphs" >Нейминг</text>
<text x="38.5" y="170.2" font-size="3.6" fill="#222" font-weight="bold" textLength="83" lengthAdjust="spacingAndGlyphs" >— это английский термин, связанный с профессиональной</text>
<text x="38.5" y="173.2" font-size="3.6" fill="#222" font-weight="bold" textLength="83" lengthAdjust="spacingAndGlyphs" >разработкой названий для брендов, проектов, компаний и так далее.</text>
<text x="38.5" y="176.2" font-size="3.6" fill="#222" font-weight="bold" textLength="78" lengthAdjust="spacingAndGlyphs" >Происходит от английского name — имя. Синоним в нашем языке</text>
<text x="38.5" y="179.2" font-size="3.6" fill="#222" font-weight="bold" textLength="63" lengthAdjust="spacingAndGlyphs" >длинный и краткий, нерусский — «имяобразование».</text>
<rect x="265" y="141.6" width="656.2" height="368.8" fill="#D2D2D2" />
<rect x="266" y="141.6" width="655.2" height="367.8" fill="#FFFFFF" />
<rect x="272" y="146" width="644" height="360" rx="16" fill="#F4F4F4"/>
<path d="M347.5 202 H839 M347.5 330.5 H839" stroke="#D8D8D8" stroke-width="1.2"/>
<path d="M347.5 201.9 V330.5 M839 201.9 V330.5" stroke="#BEBEBE" stroke-width="1"/>
<path d="M593.5 183.5 V198" stroke="#A8A8A8" stroke-width="1"/>
<path d="M598.6 180.9 A7.8 7.8 0 1 1 600.9 172.2 M596.7 178.6 A4.8 4.8 0 1 1 598.1 173.3" fill="none" stroke="#8C8C8C" stroke-width="1.3"/>
<path d="M596.8 173.6 L605.6 174.2 L600 180.2 M596.7 178.6 L598.6 180.9" fill="none" stroke="#8C8C8C" stroke-width="1.3" stroke-linejoin="round"/>
<circle cx="347.5" cy="201.9" r="3.8" fill="#fff" stroke="#8A8A8A" stroke-width="1.4"/>
<circle cx="593.5" cy="201.9" r="3.8" fill="#fff" stroke="#8A8A8A" stroke-width="1.4"/>
<circle cx="839" cy="201.9" r="3.8" fill="#fff" stroke="#8A8A8A" stroke-width="1.4"/>
<circle cx="347.5" cy="266.3" r="3.8" fill="#fff" stroke="#8A8A8A" stroke-width="1.4"/>
<circle cx="839" cy="266.3" r="3.8" fill="#fff" stroke="#8A8A8A" stroke-width="1.4"/>
<circle cx="347.5" cy="330.5" r="3.8" fill="#fff" stroke="#8A8A8A" stroke-width="1.4"/>
<circle cx="593.5" cy="330.5" r="3.8" fill="#fff" stroke="#8A8A8A" stroke-width="1.4"/>
<circle cx="839" cy="330.5" r="3.8" fill="#fff" stroke="#8A8A8A" stroke-width="1.4"/>
<text x="353.3" y="317.9" font-size="49.5" fill="#F2124F" font-weight="bold" textLength="165.8" lengthAdjust="spacingAndGlyphs" >Нейминг</text>
<text x="353" y="354.2" font-size="17.5" fill="#474747" textLength="104.5" lengthAdjust="spacingAndGlyphs" >— это английск</text>
<text x="581.5" y="354.2" font-size="17.5" fill="#474747" textLength="244.8" lengthAdjust="spacingAndGlyphs" >н, связанный с профессиональной</text>
<text x="353" y="374.6" font-size="17.5" fill="#474747" textLength="102.5" lengthAdjust="spacingAndGlyphs" >разработкой н</text>
<text x="591.2" y="374.6" font-size="17.5" fill="#474747" textLength="229.9" lengthAdjust="spacingAndGlyphs" >проектов, компаний и так далее.</text>
<text x="353.2" y="395.4" font-size="17.5" fill="#474747" textLength="99.4" lengthAdjust="spacingAndGlyphs" >Происходит от</text>
<text x="586" y="395.4" font-size="17.5" fill="#474747" textLength="187" lengthAdjust="spacingAndGlyphs" >я. Синоним в нашем языке</text>
<text x="352.6" y="415.3" font-size="17.5" fill="#474747" textLength="104" lengthAdjust="spacingAndGlyphs" >длинный и кра</text>
<text x="586" y="415.3" font-size="17.5" fill="#474747" textLength="136.8" lengthAdjust="spacingAndGlyphs" >«имяобразование».</text>
<rect x="353" y="319.2" width="103" height="1" fill="#F28272" />
<rect x="593.7" y="416.5" width="119.5" height="1" fill="#F28A8A" />
<defs><linearGradient id="shR" x1="0" x2="1" y1="0" y2="0"><stop offset="0" stop-color="#000" stop-opacity="0.09"/><stop offset="1" stop-color="#000" stop-opacity="0"/></linearGradient><linearGradient id="shB" x1="0" x2="0" y1="0" y2="1"><stop offset="0" stop-color="#000" stop-opacity="0.09"/><stop offset="1" stop-color="#000" stop-opacity="0"/></linearGradient></defs>
<rect x="586" y="303" width="4" height="137" fill="url(#shR)" />
<rect x="458" y="438" width="128" height="3" fill="url(#shB)" />
<rect x="455.5" y="300.5" width="130" height="137" fill="#FFFFFF" stroke="#E0E0E0" stroke-width="1"/>
<text x="478.9" y="314.8" font-size="10" fill="#6E6E6E" stroke="#6E6E6E" stroke-width="0.15" textLength="39.3" lengthAdjust="spacingAndGlyphs" >Неуймин</text>
<text x="478.9" y="334.3" font-size="10" fill="#6E6E6E" stroke="#6E6E6E" stroke-width="0.15" textLength="33.8" lengthAdjust="spacingAndGlyphs" >Нейман</text>
<text x="478.9" y="353.8" font-size="10" fill="#6E6E6E" stroke="#6E6E6E" stroke-width="0.15" textLength="44" lengthAdjust="spacingAndGlyphs" >Неуймина</text>
<text x="478.9" y="372.7" font-size="10" fill="#6E6E6E" stroke="#6E6E6E" stroke-width="0.15" textLength="44" lengthAdjust="spacingAndGlyphs" >Неуймине</text>
<text x="478.9" y="391.8" font-size="10" fill="#6E6E6E" stroke="#6E6E6E" stroke-width="0.15" textLength="44" lengthAdjust="spacingAndGlyphs" >Неуймину</text>
<rect x="480.3" y="396.8" width="103.5" height="1" fill="#E2E2E2" />
<text x="479" y="412.1" font-size="10" fill="#6E6E6E" stroke="#6E6E6E" stroke-width="0.15" textLength="67" lengthAdjust="spacingAndGlyphs" >Пропустить все</text>
<rect x="456.9" y="418.2" width="127.3" height="18.7" fill="#C6C6C6" />
<text x="479" y="431.2" font-size="10" fill="#444444" stroke="#444444" stroke-width="0.15" textLength="87.6" lengthAdjust="spacingAndGlyphs" >Добавить в словарь</text>
<defs><radialGradient id="glow"><stop offset="0" stop-color="#E0407A" stop-opacity="0.12"/><stop offset="0.5" stop-color="#E8407A" stop-opacity="0.45"/><stop offset="0.62" stop-color="#E8407A" stop-opacity="0.5"/><stop offset="1" stop-color="#E8407A" stop-opacity="0"/></radialGradient></defs>
<circle cx="481.6" cy="428.6" r="24" fill="url(#glow)"/>
<circle cx="481.6" cy="428.6" r="13.3" fill="none" stroke="#F0202C" stroke-width="1.5"/>
<text x="3.8" y="531.9" font-size="9.5" fill="#555555" stroke="#555555" stroke-width="0.15" textLength="47" lengthAdjust="spacingAndGlyphs" >Слайд 1 из 1</text>
<path d="M63.3 524.5 H68.5 V532.5 H63.3z M68.5 524.5 H73.5 V532.5 H68.5" fill="none" stroke="#777" stroke-width="0.9"/>
<path d="M70 527 L73 530 M73 527 L70 530" stroke="#555" stroke-width="1"/>
<text x="83.8" y="531.9" font-size="9.5" fill="#555555" stroke="#555555" stroke-width="0.15" textLength="30.4" lengthAdjust="spacingAndGlyphs" >русский</text>
<rect x="650" y="525" width="9" height="0.9" fill="#888" />
<rect x="650" y="528" width="9" height="0.9" fill="#888" />
<rect x="650" y="531" width="9" height="0.9" fill="#888" />
<path d="M652 524.5 L654.5 522.5 L657 524.5" fill="none" stroke="#888" stroke-width="0.9"/>
<text x="662.5" y="532.2" font-size="9.5" fill="#555555" stroke="#555555" stroke-width="0.15" textLength="31.8" lengthAdjust="spacingAndGlyphs" >Заметки</text>
<path d="M706 523.5 H716.2 V530.5 H710 L707.5 533.5 V530.5 H706z" fill="#555"/>
<text x="719.1" y="532.2" font-size="9.5" fill="#555555" stroke="#555555" stroke-width="0.15" textLength="48.2" lengthAdjust="spacingAndGlyphs" >Примечания</text>
<rect x="779.6" y="520.5" width="23.5" height="18.5" fill="#C8C8C8" />
<rect x="786.5" y="524.3" width="10.5" height="8.5" fill="none" stroke="#666" stroke-width="0.9"/><path d="M789 524.3 V532.8" stroke="#666" stroke-width="0.9"/><rect x="791" y="526" width="4" height="3" fill="none" stroke="#666" stroke-width="0.8"/>
<g fill="none" stroke="#777" stroke-width="0.9"><rect x="810.5" y="524.3" width="4.5" height="3.8"/><rect x="816" y="524.3" width="4.5" height="3.8"/><rect x="810.5" y="529" width="4.5" height="3.8"/><rect x="816" y="529" width="4.5" height="3.8"/></g>
<g fill="none" stroke="#777" stroke-width="0.9"><path d="M834.5 524.5 H839.5 V533 H834.5z M839.5 524.5 H844.5 V533 H839.5z"/></g>
<g fill="none" stroke="#777" stroke-width="0.9"><path d="M858.3 524.5 H869 M859.3 524.5 V530.5 H868 V524.5 M863.6 530.5 V534.5 M861 535 H866.3"/></g>
<rect x="878.7" y="528.4" width="6.3" height="1.3" fill="#555" />
<rect x="887.5" y="528.8" width="81" height="0.8" fill="#C0C0C0" />
<rect x="927" y="526.5" width="0.8" height="5" fill="#A0A0A0" />
<rect x="911" y="524.8" width="3.2" height="8.7" fill="#555" />
<path d="M970.5 529 H977.3 M973.9 525.6 V532.4" stroke="#555" stroke-width="1.3"/>
<text x="986.1" y="532.2" font-size="9.5" fill="#555555" stroke="#555555" stroke-width="0.15" textLength="16.6" lengthAdjust="spacingAndGlyphs" >64%</text>
<rect x="1011.8" y="525.3" width="8.6" height="8.4" fill="none" stroke="#777" stroke-width="0.9"/><path d="M1016.1 525.3 V527.8 M1016.1 533.7 V531.2 M1011.8 529.5 H1014.3 M1020.4 529.5 H1017.9" stroke="#777" stroke-width="1"/>
</svg>
</body></html>
